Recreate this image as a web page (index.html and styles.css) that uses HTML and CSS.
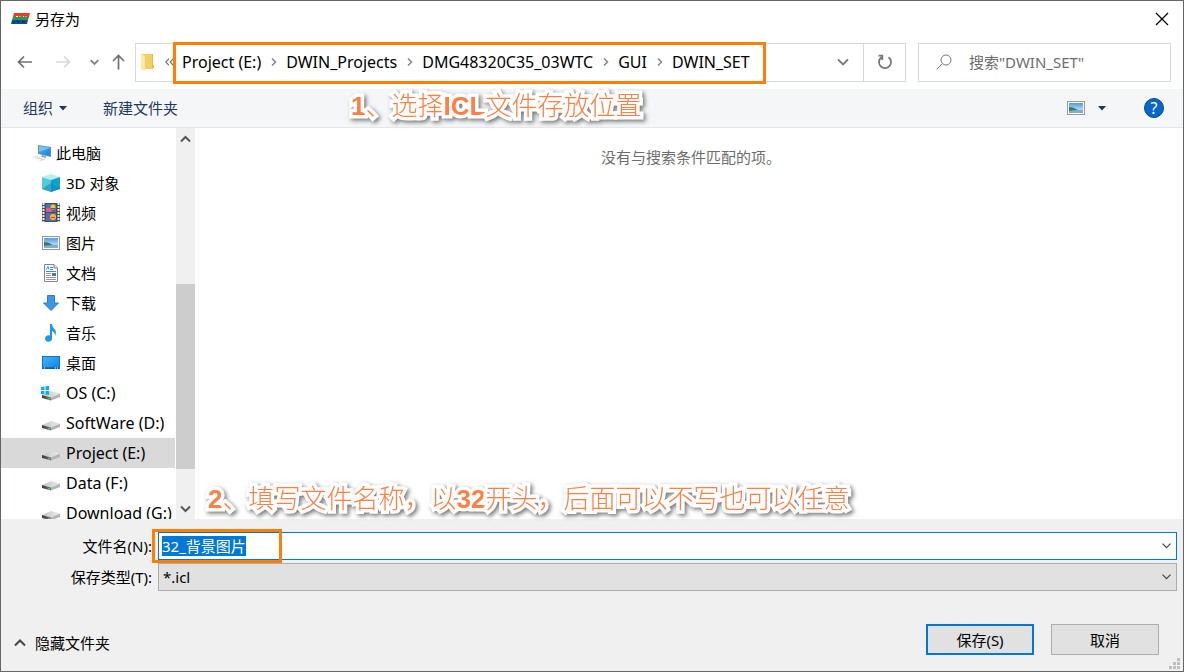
FILE: index.html
```html
<!DOCTYPE html>
<html lang="zh-CN">
<head>
<meta charset="utf-8">
<title>另存为</title>
<link rel="stylesheet" href="styles.css">
</head>
<body>
<svg class="defs" aria-hidden="true">
  <defs>
    <linearGradient id="driveTop" x1="0" x2="1"><stop offset="0" stop-color="#c4c4c4"/><stop offset="1" stop-color="#ececec"/></linearGradient>
    <linearGradient id="driveFront" x1="0" x2="1"><stop offset="0" stop-color="#3a3a3a"/><stop offset="1" stop-color="#777"/></linearGradient>
    <linearGradient id="blue" x1="0" x2="1" y2="1"><stop offset="0" stop-color="#45b4f7"/><stop offset="1" stop-color="#0a85e0"/></linearGradient>
    <linearGradient id="sky" x1="0" x2="0" y2="1"><stop offset="0" stop-color="#4f9ce8"/><stop offset="1" stop-color="#e5f5fc"/></linearGradient>
    <symbol id="drive" viewBox="0 0 18 18">
      <path d="M0 11 L9 7 L18 9.500 L9 13.500Z" fill="url(#driveTop)"/>
      <path d="M0 11 L9 13.500 V16.500 L0 14Z" fill="url(#driveFront)"/>
      <path d="M9 13.500 L18 9.500 V13 L9 16.500Z" fill="#b4b4b4"/>
      <path d="M6 14h2v1.500h-2z" fill="#43d04c"/>
    </symbol>
    <symbol id="picture" viewBox="0 0 18 18">
      <rect x=".5" y="2.500" width="17" height="13" fill="#fff" stroke="#999"/>
      <rect x="2" y="4" width="14" height="10" fill="url(#sky)"/>
      <path d="M2 8 Q6 8 9 10 T16 11.500 V12 H2Z" fill="#3e7860"/>
      <path d="M2 12 Q9 10.500 16 11.500 V14 H2Z" fill="#7fb0cf"/>
    </symbol>
  </defs>
</svg>
<div class="dialog">
  <header class="titlebar">
    <svg class="app-icon" width="20" height="14" viewBox="0 0 20 14"><path d="M3 1 H19 L18 5 H2Z" fill="#ed3b28"/><path d="M2 5 H18 L17 8 H1Z" fill="#1b9e50"/><path d="M1 8 H17 L16 12 H0Z" fill="#184b91"/><path d="M5 4.500h2M9 4v1M12 4.500h1M15 4v1" stroke="#fff" fill="none"/><path d="M2 10l2 1M6 9l2 1M11 10h3" stroke="#0b2657" fill="none"/></svg>
    <h1 class="title">另存为</h1>
    <button class="close" aria-label="关闭"><svg width="14" height="14" viewBox="0 0 14 14"><path d="M1 1 L13 13 M13 1 L1 13" stroke="#000" stroke-width="1.200"/></svg></button>
  </header>

  <div class="navrow">
    <div class="navbuttons">
      <button class="nav-wide" aria-label="后退"><svg width="16" height="14" viewBox="0 0 16 14"><path d="M15 7H1.500M7 1.500L1.500 7L7 12.500" stroke="#707070" stroke-width="1.700" fill="none"/></svg></button>
      <button class="nav-wide" aria-label="前进" disabled><svg width="16" height="14" viewBox="0 0 16 14"><path d="M1 7h13.500M9 1.500L14.500 7L9 12.500" stroke="#d9d9d9" stroke-width="1.700" fill="none"/></svg></button>
      <button class="nav-thin" aria-label="最近浏览的位置"><svg width="9" height="7" viewBox="0 0 9 7"><path d="M.7 1.200L4.500 5L8.300 1.200" stroke="#808080" stroke-width="1.800" fill="none"/></svg></button>
      <button class="nav-thin" aria-label="上移"><svg width="13" height="16" viewBox="0 0 13 16"><path d="M6.500 15.500V1.500M1 7L6.500 1.500L12 7" stroke="#707070" stroke-width="1.700" fill="none"/></svg></button>
    </div>
    <div class="address">
      <svg class="folder" width="13" height="18" viewBox="0 0 13 18"><path d="M1 1H12V16H4Z" fill="#f3cf63"/><path d="M11 1h1v11h1v3h-2z" fill="#e9b94c"/><path d="M0 1L4 3V18L0 16Z" fill="#ffe9a2"/></svg>
      <svg class="more" width="9" height="8" viewBox="0 0 9 8"><path d="M4 .7L.9 4L4 7.300M8.300 .7L5.200 4L8.300 7.300" stroke="#777" stroke-width="1.200" fill="none"/></svg>
      <nav class="crumbs" aria-label="路径">
        <button>Project (E:)</button><svg class="sep" viewBox="0 0 6 10"><path d="M1 1.500L4.500 5L1 8.500" stroke="#858585" stroke-width="1.500" fill="none"/></svg>
        <button>DWIN_Projects</button><svg class="sep" viewBox="0 0 6 10"><path d="M1 1.500L4.500 5L1 8.500" stroke="#858585" stroke-width="1.500" fill="none"/></svg>
        <button>DMG48320C35_03WTC</button><svg class="sep" viewBox="0 0 6 10"><path d="M1 1.500L4.500 5L1 8.500" stroke="#858585" stroke-width="1.500" fill="none"/></svg>
        <button>GUI</button><svg class="sep" viewBox="0 0 6 10"><path d="M1 1.500L4.500 5L1 8.500" stroke="#858585" stroke-width="1.500" fill="none"/></svg>
        <button>DWIN_SET</button>
        <span class="frame frame-path"></span>
      </nav>
      <button class="drop" aria-label="展开路径"><svg width="12" height="8" viewBox="0 0 12 8"><path d="M1 1.300L6 6.300L11 1.300" stroke="#777" stroke-width="1.900" fill="none"/></svg></button>
      <button class="refresh" aria-label="刷新"><svg width="16" height="16" viewBox="0 0 16 16"><path d="M11.500 3.200A6 6 0 1 1 4.500 3.200M1.500 1.700H5.300V6" stroke="#777" stroke-width="1.800" fill="none"/></svg></button>
    </div>
    <label class="search">
      <svg width="16" height="16" viewBox="0 0 16 16"><circle cx="10" cy="6" r="5" stroke="#777" fill="none"/><path d="M6.500 9.500L.7 15.300" stroke="#777" fill="none"/></svg>
      <input type="search" aria-label="搜索" placeholder='搜索"DWIN_SET"'>
    </label>
  </div>

  <div class="toolbar">
    <button class="organize">组织<svg width="8" height="5" viewBox="0 0 8 5"><path d="M0 0H8L4 4.500Z" fill="#1e395b"/></svg></button>
    <button class="newfolder">新建文件夹</button>
    <div class="toolbar-right">
      <button class="view" aria-label="更改视图"><svg width="18" height="18"><use href="#picture"/></svg><svg width="8" height="5" viewBox="0 0 8 5"><path d="M0 0H8L4 4.500Z" fill="#1e395b"/></svg></button>
      <button class="help" aria-label="帮助">?</button>
    </div>
    <p class="note note-path"><b>1</b>、选择<b>ICL</b>文件存放位置</p>
  </div>

  <main class="content">
    <nav class="tree" aria-label="导航窗格">
      <ul>
        <li class="root"><button><svg width="20" height="18" viewBox="0 0 20 18"><path d="M6 1L19 3V13L6 10Z" fill="#7b8d99"/><path d="M7 2L18 4V12L7 9Z" fill="url(#blue)"/><path d="M7 2L18 4L7 8Z" fill="#6fc3f8"/><path d="M10 11L14 12V14L9 13Z" fill="#96a5ae"/><path d="M0 13L6 11.500L14 15L9 17Z" fill="#cfd7dc"/><path d="M2 13.500L7 12.500L12 14.500M5 14.500L9 16" stroke="#fff" fill="none"/></svg>此电脑</button></li>
        <li><button><svg width="18" height="18" viewBox="0 0 18 18"><path d="M0 3L9 0L18 3L9 6Z" fill="#b7eef4"/><path d="M0 3L9 6V18L0 15Z" fill="#52cad9"/><path d="M18 3L9 6V18L18 15Z" fill="#13a2cc"/><path d="M9 9L18 15L9 18L0 15Z" fill="#0b7fae" opacity=".5"/></svg>3D 对象</button></li>
        <li><button><svg width="18" height="20" viewBox="0 0 18 20"><path d="M0 0H18V19H0Z" fill="#4b4b4b"/><path d="M1.500 0V19M16.500 0V19" stroke="#eee" stroke-width="2" stroke-dasharray="2 1"/><path d="M4 1h10v8H4zM4 10h10v8H4z" fill="#4374c8"/><path d="M4 5h4l2 3v1H4z" fill="#d95d96"/><circle cx="11" cy="4" r="2.500" fill="#f4c42c"/><path d="M9 5h4v1H9zM10 7h3v1h-3z" fill="#d3302b"/><circle cx="11" cy="14" r="3" fill="#f0bd2e"/><path d="M9 14h4v1H9zM6 12l2 3H5z" fill="#dd3c2c"/></svg>视频</button></li>
        <li><button><svg width="18" height="18"><use href="#picture"/></svg>图片</button></li>
        <li><button><svg width="18" height="18" viewBox="0 0 18 18"><path d="M2.500 .5H12L15.500 4V17.500H2.500Z" fill="#fff" stroke="#858585"/><path d="M12 .5V4H15.500" fill="#ddd" stroke="#858585"/><path d="M4 5.500L6 2.500L7 5.500M8 3.500h3M8 5.500h3M4 7.500h10" stroke="#2496df" fill="none"/><path d="M4 9.500h5M4 11.500h5M4 13.500h10M4 15.500h10" stroke="#999"/><path d="M10 9h4v3h-4z" fill="#43809e"/></svg>文档</button></li>
        <li><button><svg width="18" height="18" viewBox="0 0 18 18"><path d="M5.500 1.500H12.500V9H16.500L9 16.500L1.500 9H5.500Z" fill="#3a97e6" stroke="#2d7fca"/></svg>下载</button></li>
        <li><button><svg width="18" height="18" viewBox="0 0 18 18"><path d="M8 0H10Q10 3 12.500 5Q15 8 13 12Q13 8 10 7V14A3.500 3.300 0 1 1 8 11.500Z" fill="#1b98ee"/></svg>音乐</button></li>
        <li><button><svg width="18" height="18" viewBox="0 0 18 18"><rect x=".5" y="2.500" width="17" height="12" fill="url(#blue)" stroke="#0877c9"/><path d="M1 14H17" stroke="#084b83"/><path d="M2 14h1M13 14h1M15 14h1" stroke="#fff"/></svg>桌面</button></li>
        <li class="volume"><button><svg width="18" height="18" viewBox="0 0 18 18" overflow="visible"><use href="#drive" width="18" height="18"/><path d="M-1 3L2.500 2.500V6H-1ZM3.500 2.300L7 1.800V6H3.500ZM-1 7H2.500V10.300L-1 10ZM3.500 7H7V10.900L3.500 10.400Z" fill="#06b2ee"/></svg>OS (C:)</button></li>
        <li class="volume"><button><svg width="18" height="18"><use href="#drive"/></svg>SoftWare (D:)</button></li>
        <li class="volume selected"><button><svg width="18" height="18"><use href="#drive"/></svg>Project (E:)</button></li>
        <li class="volume"><button><svg width="18" height="18"><use href="#drive"/></svg>Data (F:)</button></li>
        <li class="volume"><button><svg width="18" height="18"><use href="#drive"/></svg>Download (G:)</button></li>
      </ul>
      <div class="scrollbar">
        <button aria-label="向上滚动"><svg width="11" height="8" viewBox="0 0 11 8"><path d="M1 6.500L5.500 2L10 6.500" stroke="#555" stroke-width="2" fill="none"/></svg></button>
        <span class="track"><span class="thumb"></span></span>
        <button aria-label="向下滚动"><svg width="11" height="8" viewBox="0 0 11 8"><path d="M1 1.500L5.500 6L10 1.500" stroke="#555" stroke-width="2" fill="none"/></svg></button>
      </div>
    </nav>
    <section class="files">
      <p>没有与搜索条件匹配的项。</p>
    </section>
    <p class="note note-name"><b>2</b>、填写文件名称，以<b>32</b>开头，后面可以不写也可以任意</p>
  </main>

  <footer class="footer">
    <div class="fields">
      <label for="filename">文件名(N):</label>
      <div class="combo">
        <input id="filename" type="text" value="32_背景图片" autocomplete="off" spellcheck="false">
        <button aria-label="历史文件名"><svg width="9" height="6" viewBox="0 0 9 6"><path d="M.5 .7L4.500 4.700L8.500 .7" stroke="#444" stroke-width="1.200" fill="none"/></svg></button>
        <span class="frame frame-name"></span>
      </div>
      <label for="filetype">保存类型(T):</label>
      <div class="picker">
        <select id="filetype"><option>*.icl</option></select>
        <svg width="9" height="6" viewBox="0 0 9 6"><path d="M.5 .7L4.500 4.700L8.500 .7" stroke="#444" stroke-width="1.200" fill="none"/></svg>
      </div>
    </div>
    <div class="actions">
      <button class="hide"><svg width="12" height="8" viewBox="0 0 12 8"><path d="M1 6.500L6 1.500L11 6.500" stroke="#444" stroke-width="2" fill="none"/></svg>隐藏文件夹</button>
      <button class="push primary">保存(S)</button>
      <button class="push">取消</button>
    </div>
    <svg class="grip" width="11" height="11" viewBox="0 0 11 11"><path d="M8 0h3v3h-3zM4 4h3v3h-3zM8 4h3v3h-3zM0 8h3v3h-3zM4 8h3v3h-3zM8 8h3v3h-3z" fill="#bfbfbf"/></svg>
  </footer>
</div>
<script src="main.js"></script>
</body>
</html>
```
FILE: main.js
```js
const filename = document.getElementById("filename");
filename.focus();
filename.select();
```
FILE: styles.css
```css
* { box-sizing: border-box; }
body {
  margin: 0;
  font: 15px/20px "Noto Sans", "Noto Sans CJK SC", sans-serif;
  color: #000;
}
button, input, select {
  margin: 0;
  padding: 0;
  border: 0;
  border-radius: 0;
  outline: 0;
  background: none;
  font: inherit;
  color: inherit;
}
p, ul, h1 { margin: 0; padding: 0; }
svg { display: block; flex: none; }
.defs { position: absolute; width: 0; height: 0; }

.dialog {
  display: flex;
  flex-direction: column;
  height: 100vh;
  border: 1px solid #656765;
  background: #fff;
  overflow: hidden;
}

.titlebar {
  display: flex;
  align-items: center;
  height: 36px;
  padding: 0 14px 0 10px;
}
.title { flex: 1; margin-left: 4px; font-size: 15px; font-weight: 400; }

.navrow {
  display: flex;
  align-items: center;
  height: 52px;
  padding: 0 12px 2px 0;
}
.navbuttons { display: flex; width: 134px; padding-left: 5px; }
.navbuttons button { display: flex; align-items: center; justify-content: center; height: 40px; }
.nav-wide { width: 38px; }
.nav-thin { width: 24px; }
.address {
  display: flex;
  align-items: center;
  flex: 1;
  height: 39px;
  border: 1px solid #d9d9d9;
}
.folder { margin-left: 5px; }
.more { margin: 0 -3px 0 11px; }
.crumbs {
  position: relative;
  display: flex;
  align-items: center;
  height: 37px;
  padding: 0 13px 0 11px;
  font-size: 16px;
  white-space: nowrap;
}
.sep { width: 6px; height: 10px; margin: 0 9px 0 10px; }
.frame {
  position: absolute;
  border: 3px solid #ff8000;
  pointer-events: none;
}
.frame-path { inset: -2px -3px -3px 2px; }
.drop { display: flex; margin-left: auto; padding: 12px 14px; }
.refresh {
  display: flex;
  align-items: center;
  justify-content: center;
  width: 42px;
  height: 37px;
  border-left: 1px solid #d9d9d9;
}
.search {
  display: flex;
  align-items: center;
  gap: 17px;
  width: 253px;
  height: 39px;
  margin-left: 12px;
  padding: 0 17px;
  border: 1px solid #d9d9d9;
}
.search input { flex: 1; min-width: 0; }
.search input::placeholder { color: #6d6d6d; opacity: 1; }

.toolbar {
  position: relative;
  display: flex;
  align-items: center;
  height: 39px;
  padding: 0 19px 0 22px;
  border-bottom: 1px solid #e5e7ea;
  background: #f5f6f8;
  color: #1e395b;
}
.organize, .view { display: flex; align-items: center; }
.organize { gap: 6px; }
.newfolder { margin-left: 36px; }
.toolbar-right { display: flex; align-items: center; gap: 38px; margin-left: auto; }
.view { gap: 13px; }
.help {
  width: 20px;
  height: 20px;
  border: 1px solid #06478e;
  border-radius: 50%;
  background: #0866c6;
  color: #fff;
  font-size: 16px;
  line-height: 18px;
}

.note {
  position: absolute;
  z-index: 1;
  font: 300 26px/36px "Liberation Sans", "Noto Sans CJK SC", sans-serif;
  color: #ff7f45;
  white-space: nowrap;
  -webkit-text-stroke: 7px #fff;
  paint-order: stroke fill;
  stroke-linejoin: round;
  filter: drop-shadow(2px 2px 2px #777);
}
.note b { font-weight: 700; }
.note-path { left: 350px; top: -1px; }
.note-name { left: 207px; bottom: 2px; }

.content { position: relative; display: flex; flex: 1; min-height: 0; }
.tree { display: flex; width: 198px; padding-right: 3px; border-right: 1px solid #f7f7f7; }
.tree ul { flex: 1; padding-top: 10px; overflow: hidden; list-style: none; }
.tree li { margin-right: 1px; height: 30px; }
.tree li button {
  display: flex;
  align-items: center;
  gap: 6px;
  width: 100%;
  height: 30px;
  padding-left: 41px;
  white-space: nowrap;
}
.tree .root button { gap: 4px; padding-left: 31px; }
.tree .volume { font-size: 16px; }
.tree .selected { background: #d9d9d9; }
.scrollbar { display: flex; flex-direction: column; width: 19px; background: #f0f0f0; }
.scrollbar button { display: flex; align-items: center; justify-content: center; height: 21px; }
.track { display: flex; flex: 1; flex-direction: column; justify-content: flex-end; }
.thumb { height: 53%; margin-bottom: 29px; background: #cdcdcd; }
.files { flex: 1; padding: 19px 9px; text-align: center; color: #6d6d6d; }

.footer { position: relative; padding: 13px 6px 16px 4px; background: #f0f0f0; }
.fields {
  display: grid;
  grid-template-columns: 147px 1fr;
  align-items: center;
  gap: 3px 6px;
}
.fields label { text-align: right; }
.combo {
  position: relative;
  display: flex;
  height: 28px;
  border: 1px solid #0078d7;
  background: #fff;
}
.combo input { flex: 1; min-width: 0; padding: 0 3px; line-height: 20px; }
.combo input::selection { background: #0078d7; color: #fff; }
.combo button { display: flex; align-items: center; padding: 0 5px; }
.frame-name { left: -7px; top: -4px; width: 130px; height: 34px; }
.picker { display: grid; align-items: center; }
.picker select, .picker svg { grid-area: 1 / 1; }
.picker select {
  appearance: none;
  width: 100%;
  height: 28px;
  padding: 0 24px 0 4px;
  border: 1px solid #adadad;
  background: #e1e1e1;
}
.picker svg { justify-self: end; margin-right: 6px; pointer-events: none; }

.actions { display: flex; align-items: center; gap: 17px; margin-top: 33px; padding-right: 18px; }
.hide { display: flex; align-items: center; gap: 9px; margin: 7px auto 0 9px; }
.push { width: 108px; height: 31px; border: 1px solid #adadad; background: #e1e1e1; }
.primary { border: 2px solid #0078d7; }
.grip { position: absolute; right: 3px; bottom: 2px; }
```
